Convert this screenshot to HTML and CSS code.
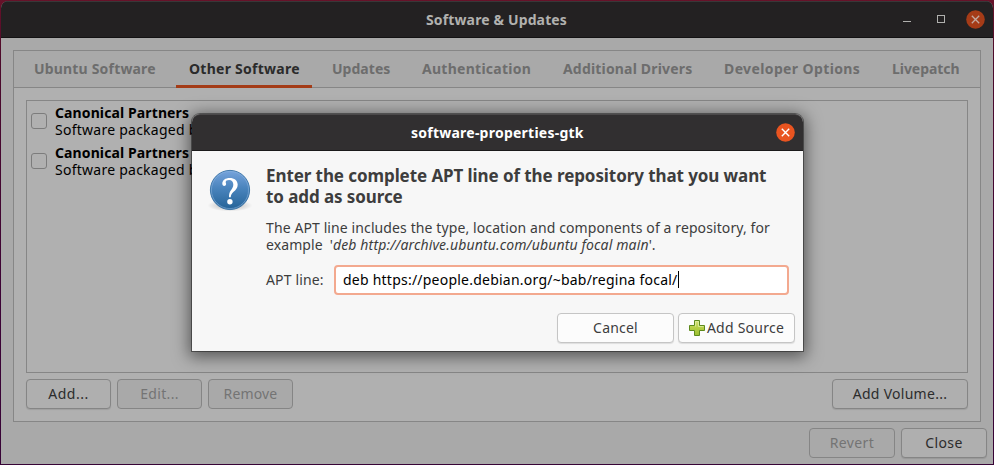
FILE: index.html
```html
<!DOCTYPE html>
<html lang="en">
<head>
<meta charset="utf-8">
<title>Software &amp; Updates</title>
<link rel="stylesheet" href="styles.css">
</head>
<body>
<main class="window">
  <header class="titlebar">
    <h1 class="title"><span>Software &amp; Updates</span></h1>
    <div class="controls">
      <svg class="ctl-min" width="8" height="19" viewBox="0 0 8 19"><path d="M0 11.5h8" stroke="#b0b0ae" fill="none"/></svg>
      <svg class="ctl-max" width="8" height="19" viewBox="0 0 8 19"><rect x=".5" y="5.5" width="7" height="7" stroke="#b0b0ae" fill="none"/></svg>
      <svg width="19" height="19" viewBox="0 0 19 19"><circle cx="9.5" cy="9.5" r="9.3" fill="#a53b17"/><path d="M5.8 5.8l7.4 7.4M13.2 5.8l-7.4 7.4" stroke="#c3aaa2" stroke-width="1.3"/></svg>
    </div>
  </header>
  <section class="notebook">
    <nav class="tabs">
      <span class="tab t1">Ubuntu Software</span>
      <span class="tab t2 active">Other Software</span>
      <span class="tab t3">Updates</span>
      <span class="tab t4">Authentication</span>
      <span class="tab t5">Additional Drivers</span>
      <span class="tab t6">Developer Options</span>
      <span class="tab t7">Livepatch</span>
    </nav>
    <div class="page">
      <div class="list">
        <div class="source"><i class="check"></i><div class="source-text"><b>Canonical Partners</b><span>Software packaged b</span></div></div>
        <div class="source"><i class="check"></i><div class="source-text"><b>Canonical Partners</b><span>Software packaged b</span></div></div>
      </div>
      <div class="actions">
        <button class="btn b-add">Add...</button>
        <button class="btn off b-edit">Edit...</button>
        <button class="btn off b-remove">Remove</button>
        <button class="btn b-volume">Add Volume...</button>
      </div>
    </div>
  </section>
  <footer class="footer">
    <button class="btn off b-revert">Revert</button>
    <button class="btn b-close">Close</button>
  </footer>
</main>

<div class="dialog">
  <header class="dialog-bar">
    <h2 class="dialog-title">software-properties-gtk</h2>
    <svg class="dialog-close" width="19" height="19" viewBox="0 0 19 19"><circle cx="9.5" cy="9.5" r="9.3" fill="#e95420"/><path d="M5.8 5.8l7.4 7.4M13.2 5.8l-7.4 7.4" stroke="#fff" stroke-width="1.4"/></svg>
  </header>
  <div class="dialog-body">
    <svg class="question" width="48" height="48" viewBox="0 0 48 48">
      <defs>
        <linearGradient id="ball" x1="0" y1="0" x2="0" y2="1"><stop offset="0" stop-color="#77a4dc"/><stop offset=".45" stop-color="#4a84bd"/><stop offset="1" stop-color="#246397"/></linearGradient>
        <radialGradient id="shade"><stop offset="0" stop-color="#000" stop-opacity=".3"/><stop offset="1" stop-color="#000" stop-opacity="0"/></radialGradient>
      </defs>
      <ellipse cx="24" cy="39.500" rx="22.500" ry="6" fill="url(#shade)"/>
      <circle cx="24" cy="24" r="19.600" fill="url(#ball)" stroke="#346fa4" stroke-width=".9"/>
      <circle cx="24" cy="24" r="18.600" fill="none" stroke="#8db4de" stroke-opacity=".55"/>
      <path d="M16.300 17.800C16.200 14 19.600 11.900 23.600 11.900C28.400 11.900 31.700 14.600 31.700 18.800C31.700 22.200 29.700 24 27.600 25.800C25.700 27.500 25 28.800 24.700 31.300H23C22.900 28.200 23.400 26.500 24.900 24.300C26.300 22.300 27.300 21 27.300 18.500C27.300 15.600 25.700 13.900 23.100 13.900C20.900 13.900 19.700 14.800 19.700 15.900C19.700 16.900 20.300 17.300 20.100 18.300C19.900 19.300 19.200 19.900 18.300 19.900C17 19.900 16.300 19 16.300 17.800Z" fill="#fff"/>
      <circle cx="23.900" cy="35.800" r="2.700" fill="#fff"/>
    </svg>
    <div class="content">
      <h3 class="heading"><span class="h-a">Enter the complete APT line of the repository that you want</span><br>to add as source</h3>
      <p class="desc"><span class="d-a">The APT line includes the type, location and components of a repository, for</span><br><span class="d-b">example</span>'<em>deb http://archive.ubuntu.com/ubuntu focal main</em>'.</p>
      <div class="field"><label class="label">APT line:</label><div class="entry"><span class="value">deb https://people.debian.org/~bab/regina focal/</span><i class="caret"></i></div></div>
    </div>
  </div>
  <div class="dialog-actions">
    <button class="btn lit b-cancel">Cancel</button>
    <button class="btn lit b-source">
      <svg width="16" height="16" viewBox="0 0 16 16"><defs><linearGradient id="plus" x1="0" y1="0" x2="0" y2="1"><stop offset="0" stop-color="#d3e37c"/><stop offset=".5" stop-color="#b5cf45"/><stop offset="1" stop-color="#9abd32"/></linearGradient></defs><path d="M5.500 .5h5v5h5v5h-5v5h-5v-5h-5v-5h5z" fill="url(#plus)" stroke="#5d8a1c" stroke-linejoin="round"/><path d="M6.500 6.500v-5h3v5h5" fill="none" stroke="#e4efab" stroke-opacity=".7"/></svg>
      <span>Add Source</span>
    </button>
  </div>
</div>
</body>
</html>
```
FILE: styles.css
```css
* { box-sizing: border-box; }
body {
  margin: 0;
  width: 994px;
  height: 465px;
  overflow: hidden;
  position: relative;
  padding: 1px 1px 1px;
  background: linear-gradient(#671229, #4c0a2b 60px, #3c0235 300px, #370336);
  font: 14px/17px "Noto Sans", sans-serif;
  color: #2c2c2c;
}
h1, h2, h3, p { margin: 0; font-size: 14px; }
button { font: inherit; color: inherit; margin: 0; }
svg { display: block; flex: none; }

.window {
  height: 463px;
  display: flex;
  flex-direction: column;
  background: #a9a9a9;
  border-radius: 7px 7px 0 0;
  overflow: hidden;
}
.titlebar {
  height: 37px;
  flex: none;
  display: flex;
  align-items: center;
  background: #232122;
  border-top: 1px solid #393738;
  border-bottom: 1px solid #131213;
}
.title { flex: 1; padding-left: 425px; color: #b1b1af; letter-spacing: .135px; }
.controls { display: flex; align-items: center; padding: 0 8px 1px 0; }
.ctl-min { margin-right: 26px; }
.ctl-max { margin-right: 21px; }

.notebook {
  height: 372px;
  margin: 12px 12px 0;
  display: flex;
  flex-direction: column;
  background: #b0b0b0;
  border: 1px solid #868686;
}
.tabs {
  height: 37px;
  flex: none;
  display: flex;
  padding-left: 20px;
  background: #a9a9a9;
  border-bottom: 1px solid #868686;
}
.tab { position: relative; flex: none; white-space: nowrap; font-weight: bold; color: #6d6d6d; line-height: 36px; }
.active { color: #2b2b2b; }
.active::after { content: ""; position: absolute; left: -13px; bottom: -1px; width: 136px; height: 3px; background: #a43c17; }
.t1 { width: 155px; letter-spacing: .18px; }
.t2 { width: 143px; letter-spacing: .26px; }
.t3 { width: 90px; letter-spacing: .03px; }
.t4 { width: 141px; letter-spacing: .27px; }
.t5 { width: 161px; letter-spacing: .18px; }
.t6 { width: 168px; letter-spacing: .38px; }
.t7 { letter-spacing: -.05px; }

.page { flex: 1; padding: 12px; display: flex; flex-direction: column; gap: 6px; }
.list { height: 273px; border: 1px solid #868686; padding: 3px 4px; }
.source { height: 40px; display: flex; color: #000; }
.check { width: 16px; height: 16px; margin: 9px 8px 0 0; border: 1px solid #7c7c7c; border-radius: 3px; background: #b0b0b0; }
.source-text { display: flex; flex-direction: column; white-space: nowrap; }
.source-text b { letter-spacing: .11px; }
.source-text span { letter-spacing: .25px; }

.actions { display: flex; gap: 6px; }
.btn {
  height: 30px;
  padding: 0 0 1px;
  display: flex;
  align-items: center;
  justify-content: center;
  background: #afafaf;
  border: 1px solid #858585;
  border-radius: 4px;
  box-shadow: 0 1px 1px rgba(0, 0, 0, .1);
  white-space: nowrap;
}
.off { color: #747474; background: #a9a9a9; box-shadow: none; }
.b-add { width: 85px; letter-spacing: .5px; }
.b-edit { width: 85px; letter-spacing: .34px; }
.b-remove { width: 85px; letter-spacing: .15px; }
.b-volume { width: 136px; margin-left: auto; letter-spacing: .28px; }
.footer { display: flex; gap: 6px; justify-content: flex-end; padding: 6px 6px 0 0; }
.b-revert { width: 86px; letter-spacing: .38px; }
.b-close { width: 86px; letter-spacing: .4px; }

.dialog {
  position: absolute;
  left: 192px;
  top: 114px;
  width: 611px;
  height: 237px;
  display: flex;
  flex-direction: column;
  background: #f7f7f7;
  color: #3d3d3d;
  border-radius: 8px 8px 0 0;
  box-shadow: 0 0 0 1px rgba(0, 0, 0, .4), 0 3px 16px 3px rgba(0, 0, 0, .5);
}
.dialog-bar {
  height: 37px;
  flex: none;
  display: flex;
  align-items: center;
  justify-content: space-between;
  padding: 0 8px 0 219px;
  background: #312f30;
  border-top: 1px solid #4b494a;
  border-bottom: 1px solid #1b1a1b;
  border-radius: 8px 8px 0 0;
}
.dialog-title { color: #fff; letter-spacing: .24px; }
.dialog-close { margin-bottom: 1px; }
.dialog-body { display: flex; padding: 14px 14px 0; }
.question { margin: 1px 12px 0 0; }
.content { width: 524px; }
.heading { font-size: 17px; line-height: 21px; letter-spacing: -.085px; white-space: nowrap; }
.desc { margin-top: 12px; white-space: nowrap; }
.d-a { letter-spacing: .105px; }
.d-b { letter-spacing: .1px; margin-right: 7px; }
.desc em { letter-spacing: .14px; }
.field { display: flex; align-items: center; margin-top: 12px; }
.label { width: 68px; padding-bottom: 2px; letter-spacing: .14px; }
.entry { width: 455px; height: 30px; display: flex; align-items: center; padding: 0 0 2px 7px; border: 2px solid #f3a98f; border-radius: 4px; background: #fff; color: #000; }
.value { letter-spacing: .23px; white-space: nowrap; }
.caret { width: 1px; height: 17px; background: #000; }
.dialog-actions { display: flex; justify-content: flex-end; gap: 4px; padding: 18px 8px 0; }
.lit { background: #fcfcfc; border-color: #c5c5c5; }
.b-cancel { width: 117px; letter-spacing: .2px; }
.b-source { width: 117px; gap: 2px; letter-spacing: .25px; }
```
